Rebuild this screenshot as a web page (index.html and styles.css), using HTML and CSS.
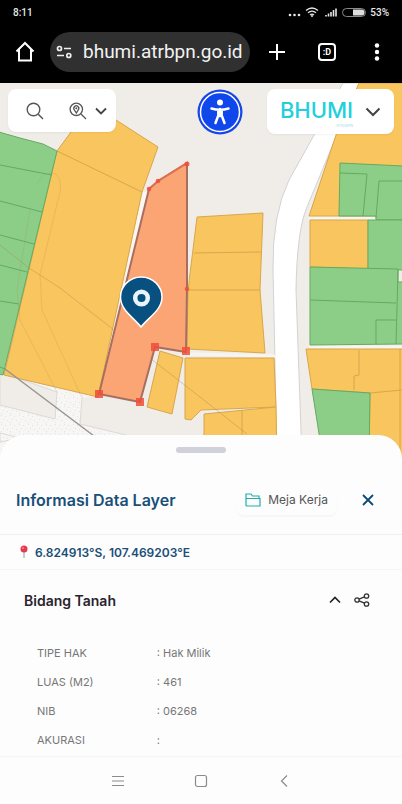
FILE: index.html
```
<!DOCTYPE html>
<html lang="id">
<head>
<meta charset="utf-8">
<meta name="viewport" content="width=device-width, initial-scale=1">
<title>BHUMI</title>
<link rel="stylesheet" href="styles.css">
</head>
<body>
<header class="chrome">
  <div class="status">
    <span>8:11</span>
    <span class="status-right">
      <svg width="78" height="14" viewBox="0 0 78 14" aria-hidden="true">
        <g fill="#e8e8e8"><circle cx="2" cy="10" r="1.3"/><circle cx="6.500" cy="10" r="1.300"/><circle cx="11" cy="10" r="1.300"/></g>
        <g fill="none" stroke="#e8e8e8" stroke-width="1.300"><path d="M18 5.500q6-5 12 0M20 7.800q4-3.400 8 0M22 10q2-1.800 4 0"/></g>
        <circle cx="24" cy="11" r="1" fill="#e8e8e8"/>
        <g stroke="#e8e8e8" stroke-width="1.600"><path d="M38 11.500v-1.500M40.500 11.500v-3M43 11.500v-4.500M45.500 11.500v-6.500M48 11.500v-8"/></g>
        <rect x="54.500" y="3.500" width="23" height="8" rx="4" fill="none" stroke="#8a8a8a"/>
        <path d="M65 4.500h8.500a3 3 0 0 1 0 6H65z" fill="#ddd"/>
      </svg>
      <span>53%</span>
    </span>
  </div>
  <div class="toolbar">
    <button class="bar-btn" aria-label="Beranda"><svg width="20" height="22" viewBox="0 0 20 22"><path d="M1.500 10.500 10 2l8.500 8.500M4 8.500V19.500h12V8.500" fill="none" stroke="#fff" stroke-width="2"/></svg></button>
    <div class="address">
      <svg width="17" height="14" viewBox="0 0 17 14" aria-hidden="true"><g fill="none" stroke="#eee" stroke-width="1.700"><circle cx="3.500" cy="3.500" r="2"/><path d="M8 3.500h7M1 10.500h7"/><circle cx="12.800" cy="10.500" r="2"/></g></svg>
      <input class="url" type="text" value="bhumi.atrbpn.go.id" aria-label="Alamat situs">
    </div>
    <div class="bar-actions">
      <button class="bar-btn" aria-label="Tab baru"><svg width="18" height="18" viewBox="0 0 18 18"><path d="M9 1v16M1 9h16" stroke="#fff" stroke-width="2"/></svg></button>
      <button class="bar-btn" aria-label="Buka tab"><span class="tab-count">:D</span></button>
      <button class="bar-btn" aria-label="Menu"><svg width="6" height="18" viewBox="0 0 6 18"><g fill="#fff"><circle cx="3" cy="2.500" r="2.200"/><circle cx="3" cy="9" r="2.200"/><circle cx="3" cy="15.500" r="2.200"/></g></svg></button>
    </div>
  </div>
</header>

<main class="main">
  <section class="map" aria-label="Peta bidang tanah">
    <svg class="map-canvas" viewBox="0 83 402 376" preserveAspectRatio="xMidYMin slice" aria-hidden="true">
      <defs>
        <pattern id="speckle" width="9" height="9" patternUnits="userSpaceOnUse">
          <rect width="9" height="9" fill="#f7f6f5"/>
          <path d="M1 1h1v1H1zM5 2h1v1H5zM3 5h1v1H3zM7 6h1v1H7zM1 8h1v1H1z" fill="#e4e3e1"/>
        </pattern>
      </defs>
      <rect y="83" width="402" height="376" fill="#f0ede9"/>
      <path d="M0 370 100 395 82 398 80 424 130 436V459H0z" fill="url(#speckle)"/>
      <path d="M0 372 57 392 55 419 0 405z" fill="#f0ede9" stroke="#dcdad7"/>
      <path d="M0 433 20 438 0 442zM82 398 80 424 130 436" fill="none" stroke="#dcdad7"/>
      <path d="M343 83 313 137 289 180Q272 215 273 270L277 459H302L296 290Q297 230 307 207L336 137 360 83z" fill="#fff" stroke="#d2d2d4"/>
      <path d="M145 192 100 396" stroke="#fbf6f0" stroke-width="4"/>
      <path d="M187 354 276 356M309 218H376M309 347H402" stroke="#f8f5ee" stroke-width="3"/>
      <g fill="#f8c55e" stroke="#d9a64b">
        <path d="M57 151 68 136 76 125 116 120 158 147 142 192 98 397 4 375z"/>
        <path d="M197 217 263 213 260 290 265 353 187 349 188 290z"/>
        <path d="M160 351 183 358 172 414 147 407z"/>
        <path d="M185 358H274L276 407 201 410 191 420 185 419z"/>
        <path d="M204 414 276 407 277 459H204z"/>
        <path d="M359 83H403V216H309L336 135z"/>
        <path d="M310 220H368V269L310 267z"/>
        <path d="M306 349H403V459H369L370 393 312 389z"/>
        <path d="M57 151 142 192M194 253 261 252M188 290H260M242 410V459M359 350V375L354 376V390M370 393 402 390M400 349V459" fill="none"/>
      </g>
      <g fill="#8cce88" stroke="#62ab60">
        <path d="M-1 132 20 138 43 144 57 151 3 375-1 374z"/>
        <path d="M340 163 403 166V220H376V216H339z"/>
        <path d="M368 220H403V270L368 269z"/>
        <path d="M310 267 398 269V282H403V344L310 345z"/>
        <path d="M312 389 370 393 369 459H323z"/>
        <path d="M0 165 52 175M0 201 42 212M0 235 34 244M0 265 27 272M0 301 19 304M0 367 5 369M340 173 367 174 363 216M376 218 379 181H402M310 300 396 303M398 270 396 344M376 344V320H396" fill="none"/>
      </g>
      <g fill="none" stroke="#a98a48" stroke-opacity=".4">
        <path d="M0 245 29 268 60 288 200 397 247 434"/>
        <path d="M37 184Q42 170 56 174 64 182 58 200L40 275 42 310 82 398M30 210 17 290 20 320 57 392" stroke-opacity=".2"/>
      </g>
      <path d="M5 369 94 436" stroke="#989590" stroke-width="1.500"/>
      <path d="M149 189 158 181 187 163V288L186 352 155 347 140 402 99 394z" fill="#fba574" stroke="#a86f60" stroke-width="2"/>
      <path d="M149 189 158 181 187 163" fill="none" stroke="#ee6b4b" stroke-width="1.500"/>
      <g fill="#f04d38" fill-opacity=".85"><circle cx="149" cy="189" r="2.300"/><circle cx="158" cy="181" r="2.300"/><circle cx="187" cy="164" r="2.500"/><circle cx="187" cy="289" r="2.300"/><path d="M182 347h8v8h-8zM151 343h8v8h-8zM136 398h8v8h-8zM95 390h8v8h-8z"/></g>
      <path d="M141 327C133 317 120.500 310 120.500 297A20.750 20 0 0 1 162 297C162 310 149 317 141 327z" fill="#07507f" stroke="#fff" stroke-width="1.500"/>
      <circle cx="141.500" cy="298" r="6.300" fill="#07507f" stroke="#e9f5fb" stroke-width="4.500"/>
    </svg>
    <div class="map-controls">
      <div class="card search-card">
        <button class="icon-btn" aria-label="Cari"><svg width="18" height="18" viewBox="0 0 18 18"><path d="M12.300 12.300 17 17" stroke="#555" stroke-width="1.500"/><circle cx="7.500" cy="7.500" r="6.300" fill="none" stroke="#555" stroke-width="1.400"/></svg></button>
        <button class="icon-btn layer-search" aria-label="Cari lokasi">
          <svg width="18" height="18" viewBox="0 0 18 18"><g fill="none" stroke="#555" stroke-width="1.300"><path d="M12 12 17 17"/><circle cx="7.300" cy="7.300" r="6.200"/><path d="M7.300 11 5.300 7.800a2.500 2.500 0 1 1 4 0z"/></g><circle cx="7.300" cy="6.300" r="1" fill="#555"/></svg>
          <svg width="12" height="8" viewBox="0 0 12 8"><path d="M1 1.500 6 6.500 11 1.500" fill="none" stroke="#444" stroke-width="1.800"/></svg>
        </button>
      </div>
      <button class="access" aria-label="Aksesibilitas"><svg width="46" height="46" viewBox="0 0 46 46"><circle cx="23" cy="23" r="22.500" fill="#1546e8"/><circle cx="23" cy="23" r="19.500" fill="#1047ec" stroke="#fff" stroke-width="1.500"/><circle cx="23" cy="13.500" r="3" fill="#fff"/><path d="M14.500 19.500Q23 22 31.500 19.500M23 20v7M21.300 21V26.500L18.500 34M24.700 21V26.500L27.500 34" fill="none" stroke="#fff" stroke-width="2.500" stroke-linecap="round" stroke-linejoin="round"/></svg></button>
      <button class="card brand">
        <span class="logo"><span class="brand-name">BHUMI</span><span class="brand-sub">ATR/BPN</span></span>
        <svg width="16" height="10" viewBox="0 0 16 10" aria-hidden="true"><path d="M1.500 1.500 8 8 14.500 1.500" fill="none" stroke="#444" stroke-width="2"/></svg>
      </button>
    </div>
  </section>

  <section class="sheet">
    <div class="handle"></div>
    <div class="sheet-head">
      <h1 class="title">Informasi Data Layer</h1>
      <button class="desk"><svg width="16" height="14" viewBox="0 0 16 14" aria-hidden="true"><path d="M1 13V1h5l1.500 2H14v2.500H1M14 5.500h1V13H1" fill="none" stroke="#20aeb0" stroke-width="1.200"/></svg>Meja Kerja</button>
      <button class="close" aria-label="Tutup"><svg width="12" height="12" viewBox="0 0 12 12"><path d="M1 1 11 11M11 1 1 11" stroke="#0c4a78" stroke-width="1.800"/></svg></button>
    </div>
    <div class="coords">
      <svg width="8" height="14" viewBox="0 0 8 14" aria-hidden="true"><path d="M4 6v7" stroke="#aebcc4" stroke-width="1.500"/><circle cx="4" cy="4" r="3.500" fill="#e63950"/><circle cx="3" cy="3" r="1" fill="#f58a96"/></svg>
      <span>6.824913°S, 107.469203°E</span>
    </div>
    <div class="section-head">
      <h2 class="section-title">Bidang Tanah</h2>
      <button class="icon-btn" aria-label="Tutup bagian"><svg width="12" height="8" viewBox="0 0 12 8"><path d="M1 6.500 6 1.500 11 6.500" fill="none" stroke="#222" stroke-width="1.700"/></svg></button>
      <button class="icon-btn" aria-label="Bagikan"><svg width="16" height="14" viewBox="0 0 16 14"><g fill="none" stroke="#333" stroke-width="1.300"><circle cx="3" cy="7" r="2.200"/><circle cx="12.500" cy="3" r="2.200"/><circle cx="12.500" cy="11" r="2.200"/><path d="M5 6.200 10.500 3.800M5 7.800 10.500 10.200"/></g></svg></button>
    </div>
    <table class="details">
      <tbody>
        <tr><th scope="row">TIPE HAK</th><td>: Hak Milik</td></tr>
        <tr><th scope="row">LUAS (M2)</th><td>: 461</td></tr>
        <tr><th scope="row">NIB</th><td>: 06268</td></tr>
        <tr><th scope="row">AKURASI</th><td>:</td></tr>
      </tbody>
    </table>
  </section>
</main>

<nav class="system-nav" aria-label="Navigasi sistem">
  <button class="icon-btn" aria-label="Aplikasi terbaru"><svg width="14" height="12" viewBox="0 0 14 12"><path d="M1 1.500h12M1 6h12M1 10.500h12" stroke="#8b8b8b" stroke-width="1.200"/></svg></button>
  <button class="icon-btn" aria-label="Layar utama"><svg width="14" height="14" viewBox="0 0 14 14"><rect x="1.500" y="1.500" width="11" height="11" rx="2" fill="none" stroke="#8b8b8b" stroke-width="1.200"/></svg></button>
  <button class="icon-btn" aria-label="Kembali"><svg width="14" height="14" viewBox="0 0 14 14"><path d="M10 1.500 4.500 7 10 12.500" fill="none" stroke="#8b8b8b" stroke-width="1.200"/></svg></button>
</nav>
</body>
</html>
```
FILE: styles.css
```
* { box-sizing: border-box; }

body {
  margin: 0;
  min-height: 100vh;
  display: flex;
  flex-direction: column;
  background: #fdfdfd;
  font-family: Inter, "Liberation Sans", sans-serif;
}

svg { display: block; flex: none; }

button {
  border: 0;
  padding: 0;
  background: none;
  font: inherit;
  display: flex;
  align-items: center;
  justify-content: center;
}

/* Browser chrome */
.chrome { background: #000; color: #fff; }

.status {
  display: flex;
  justify-content: space-between;
  align-items: center;
  height: 24px;
  padding: 0 13px;
  font: 500 10px Roboto, sans-serif;
  color: #e8e8e8;
}

.status-right { display: flex; align-items: center; gap: 4px; }

.toolbar {
  display: flex;
  align-items: center;
  height: 59px;
  padding-bottom: 4px;
}

.bar-btn { flex: none; width: 50px; height: 40px; }

.address {
  display: flex;
  align-items: center;
  gap: 10px;
  flex: 1;
  min-width: 0;
  height: 40px;
  padding: 0 8px 0 6px;
  border-radius: 20px;
  background: #303030;
}

.bar-actions { display: flex; flex: none; padding-left: 2px; }

.url {
  flex: 1;
  min-width: 0;
  border: 0;
  padding: 0;
  background: none;
  color: #f2f2f2;
  font: 19px Roboto, sans-serif;
}

.tab-count {
  width: 18px;
  height: 18px;
  border: 2px solid #fff;
  border-radius: 4px;
  color: #fff;
  font: 700 9px/14px Roboto, sans-serif;
}

/* Map */
.main { flex: 1; display: flex; flex-direction: column; }

.map { position: relative; height: 376px; overflow: hidden; }

.map-canvas { position: absolute; inset: 0; width: 100%; height: 100%; }

.map-controls {
  position: relative;
  display: flex;
  align-items: flex-start;
  gap: 24px;
  padding: 6px 8px;
}

.card { background: #fff; border-radius: 8px; box-shadow: 0 1px 2px #0000000d; }

.search-card {
  display: flex;
  justify-content: space-between;
  width: 108px;
  height: 43px;
  padding: 0 9px 0 18px;
}

.layer-search { gap: 8px; }

.access { margin-left: auto; }

.brand { width: 127px; height: 45px; gap: 12px; }

.logo { display: flex; flex-direction: column; color: #22cfdc; padding-top: 2px; }

.brand-name { font-size: 22px; font-weight: 500; line-height: 26px; }

.brand-sub {
  align-self: flex-end;
  color: #a4dfe4;
  font-size: 4px;
  line-height: 6px;
}

/* Bottom sheet */
.sheet {
  position: relative;
  flex: 1;
  margin-top: -24px;
  padding-top: 12px;
  border-radius: 24px 24px 0 0;
  background: #fdfdfd;
}

.handle {
  width: 50px;
  height: 6px;
  margin: 0 auto;
  border-radius: 3px;
  background: #d0d1da;
}

.sheet-head {
  display: flex;
  align-items: center;
  height: 82px;
  padding: 12px 28px 0 16px;
  border-bottom: 1px solid #f0f0f0;
}

.title { flex: 1; margin: 0; color: #194f78; font-size: 16px; font-weight: 600; }

.desk {
  gap: 7px;
  height: 30px;
  padding: 0 9px;
  border-radius: 8px;
  color: #555;
  font-size: 12px;
  box-shadow: 0 2px 2px #00000008;
}

.close { margin-left: 25px; }

.coords {
  display: flex;
  align-items: center;
  gap: 7px;
  height: 35px;
  padding: 0 20px;
  border-bottom: 1px solid #f5f5f5;
  color: #194f78;
  font-size: 12px;
  font-weight: 600;
}

.section-head {
  display: flex;
  align-items: center;
  gap: 13px;
  height: 60px;
  padding: 0 32px 0 24px;
}

.section-title { flex: 1; margin: 0; color: #29232e; font-size: 14px; font-weight: 600; }

.details { width: 100%; margin-top: 8px; border-collapse: collapse; color: #777; font-size: 11px; }

.details th,
.details td { height: 29px; padding: 0; font-weight: 400; text-align: left; }

.details th { width: 39%; padding-left: 37px; }

/* System navigation */
.system-nav {
  display: flex;
  justify-content: center;
  gap: 69px;
  height: 48px;
  border-top: 1px solid #f5f5f5;
}
```
